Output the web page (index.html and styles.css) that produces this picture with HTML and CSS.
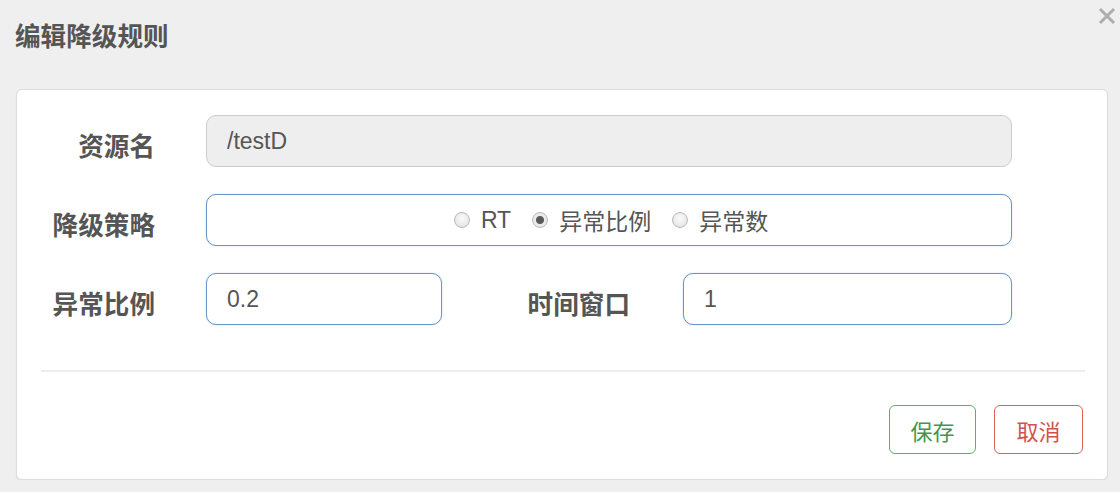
FILE: index.html
```html
<!DOCTYPE html>
<html lang="zh-CN">
<head>
    <meta charset="UTF-8">
    <meta name="viewport" content="width=device-width, initial-scale=1.0">
    <title>编辑降级规则</title>
    <link rel="stylesheet" href="styles.css">
</head>
<body>
    <div class="dialog">
        <div class="dialog-header">
            <h4 class="dialog-title">编辑降级规则</h4>
            <button class="close-button" type="button" aria-label="关闭">
                <svg viewBox="0 0 18 18"><path d="M2 2L16 16M16 2L2 16"/></svg>
            </button>
        </div>
        <div class="dialog-card">
            <form class="rule-form">
                <div class="form-row">
                    <label class="form-label">资源名</label>
                    <input class="form-input input-full" type="text" value="/testD" disabled>
                </div>
                <div class="form-row">
                    <label class="form-label">降级策略</label>
                    <div class="form-input input-full radio-group">
                        <label class="radio-option"><input type="radio" name="grade"><span>RT</span></label>
                        <label class="radio-option"><input type="radio" name="grade" checked><span>异常比例</span></label>
                        <label class="radio-option"><input type="radio" name="grade"><span>异常数</span></label>
                    </div>
                </div>
                <div class="form-row">
                    <label class="form-label">异常比例</label>
                    <input class="form-input input-short" type="text" value="0.2">
                    <label class="form-label label-wide">时间窗口</label>
                    <input class="form-input input-mid" type="text" value="1">
                </div>
            </form>
            <div class="divider"></div>
            <div class="dialog-footer">
                <button class="btn btn-save" type="button">保存</button>
                <button class="btn btn-cancel" type="button">取消</button>
            </div>
        </div>
    </div>
</body>
</html>
```

FILE: styles.css
```css
body {
    margin: 0;
    background-color: #efefef;
    font-family: "Liberation Sans", "Noto Sans CJK SC", sans-serif;
    color: #555;
}
.dialog {
    padding: 0 12px 0 16px;
}
.dialog-header {
    height: 89px;
    display: flex;
    justify-content: space-between;
    align-items: flex-start;
    margin-right: -8px;
}
.dialog-title {
    margin: 21px 0 0 -1px;
    font-size: 25.6px;
    line-height: 32px;
    font-weight: bold;
    color: #555;
}
.close-button {
    margin-top: 7px;
    padding: 0;
    border: none;
    background: none;
    width: 18px;
    height: 18px;
    cursor: pointer;
}
.close-button svg {
    width: 18px;
    height: 18px;
    display: block;
    stroke: #adadad;
    stroke-width: 3;
    fill: none;
}
.dialog-card {
    background-color: #fff;
    border: 1px solid #dcdcdc;
    border-radius: 6px;
    box-shadow: 0 1px 2px rgba(0, 0, 0, 0.06);
    box-sizing: border-box;
    height: 391px;
}
.rule-form {
    padding-top: 25px;
    display: flex;
    flex-direction: column;
    gap: 27px;
}
.form-row {
    display: flex;
    align-items: center;
}
.form-label {
    width: 138px;
    margin-right: 51px;
    padding-top: 6px;
    text-align: right;
    font-size: 25.6px;
    font-weight: bold;
    color: #555;
    box-sizing: border-box;
}
.label-wide {
    width: 188px;
    margin-right: 53px;
}
.form-input {
    height: 52px;
    box-sizing: border-box;
    border: 1px solid #6a95c4;
    border-radius: 10px;
    padding: 0 20px;
    font-family: "Liberation Sans", "Noto Sans CJK SC", sans-serif;
    font-size: 23px;
    color: #555;
    background-color: #fff;
    box-shadow: 0 0 2px rgba(102, 150, 210, 0.35);
    outline: none;
}
.form-input:disabled {
    background-color: #eee;
    border-color: #ccc;
    box-shadow: none;
    color: #555;
}
.input-full {
    width: 806px;
}
.input-short {
    width: 236px;
}
.input-mid {
    width: 329px;
}
.radio-group {
    display: flex;
    justify-content: center;
    align-items: center;
    gap: 21px;
    padding: 0 20px 0 24px;
}
.radio-option {
    display: flex;
    align-items: center;
    gap: 11px;
    font-size: 23px;
    color: #555;
}
.radio-option input {
    appearance: none;
    width: 16px;
    height: 16px;
    margin: 0;
    border: 1px solid #b9b9b9;
    border-radius: 50%;
    background: radial-gradient(circle at 50% 40%, #fbfbfb, #dedede);
}
.radio-option input:checked {
    background: radial-gradient(circle, #595959 0 3.5px, #e9e9e9 4.5px);
}
.divider {
    margin: 45px 22px 0 24px;
    border-top: 2px solid #ececec;
}
.dialog-footer {
    display: flex;
    justify-content: flex-end;
    gap: 18px;
    padding: 33px 24px 0 0;
}
.btn {
    height: 49px;
    padding: 0;
    background-color: #fff;
    border: 1px solid;
    border-radius: 6px;
    font-family: "Noto Sans CJK SC", sans-serif;
    font-size: 22px;
    cursor: pointer;
}
.btn-save {
    width: 87px;
    border-color: #5cae6c;
    color: #3f9650;
}
.btn-cancel {
    width: 89px;
    border-color: #d9605c;
    color: #d2524e;
}
```
